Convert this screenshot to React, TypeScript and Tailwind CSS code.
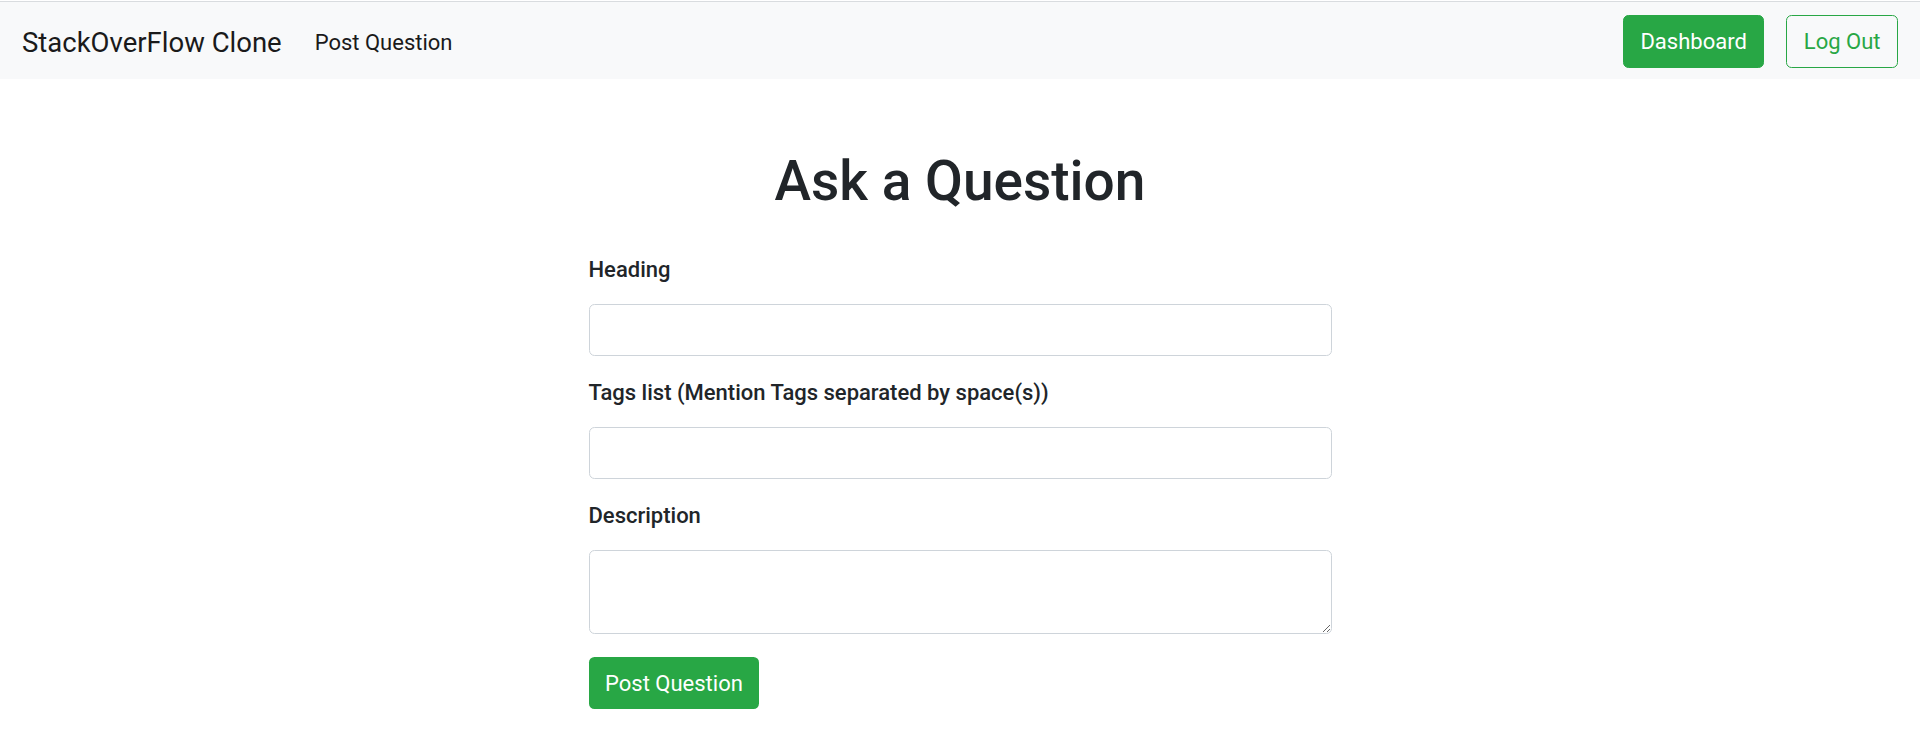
export default function App() {
  const fields = [
    { id: "heading", label: "Heading", kind: "input" },
    { id: "tags", label: "Tags list (Mention Tags separated by space(s))", kind: "input" },
    { id: "description", label: "Description", kind: "textarea" },
  ];

  return (
    <div className="min-h-screen bg-white font-['Roboto','Noto_Sans',sans-serif] text-[#212529]">
      {/* navbar */}
      <nav className="mt-px flex items-center border-t border-[#d9dcdf] bg-[#f8f9fa] px-[22px] py-[11px]">
        <a className="pt-[9px] pb-[5px] text-[27.5px] leading-[41px] text-[#1a1a1a]" href="#">
          StackOverFlow Clone
        </a>
        <ul className="ml-[22px] flex">
          <li>
            <a className="block px-[11px] pt-[13px] pb-[9px] text-[22px] leading-[33px] text-[#1a1a1a]" href="#">
              Post Question
            </a>
          </li>
        </ul>
        <div className="ml-auto flex items-center gap-[22px] pt-px">
          <button className="h-[53px] rounded-[5.5px] border border-[#28a745] bg-[#28a745] px-[16.5px] text-[22px] text-white">
            Dashboard
          </button>
          <button className="h-[53px] rounded-[5.5px] border border-[#28a745] bg-transparent px-[16.5px] text-[22px] text-[#28a745]">
            Log Out
          </button>
        </div>
      </nav>

      <main className="mx-auto w-[743px]">
        <h1 className="mt-[69px] text-center text-[55px] font-medium leading-[66px]">Ask a Question</h1>

        <form className="mt-[39px]" onSubmit={(e) => e.preventDefault()}>
          {fields.map((f) => (
            <div key={f.id} className="mb-[20px]">
              <label htmlFor={f.id} className="mb-[18px] block text-[22px] font-medium leading-[33px]">
                {f.label}
              </label>
              {f.kind === "input" ? (
                <input
                  id={f.id}
                  type="text"
                  className="block h-[52px] w-full rounded-[5.5px] border border-[#ced4da] px-[16.5px] text-[22px] outline-none"
                />
              ) : (
                <textarea
                  id={f.id}
                  rows={2}
                  className="block h-[84px] w-full rounded-[5.5px] border border-[#ced4da] px-[16.5px] py-[8px] text-[22px] outline-none"
                />
              )}
            </div>
          ))}
          <button
            type="submit"
            className="mt-[3px] h-[52px] rounded-[5.5px] bg-[#28a745] px-[16.5px] text-[22px] text-white"
          >
            Post Question
          </button>
        </form>
      </main>
    </div>
  );
}
